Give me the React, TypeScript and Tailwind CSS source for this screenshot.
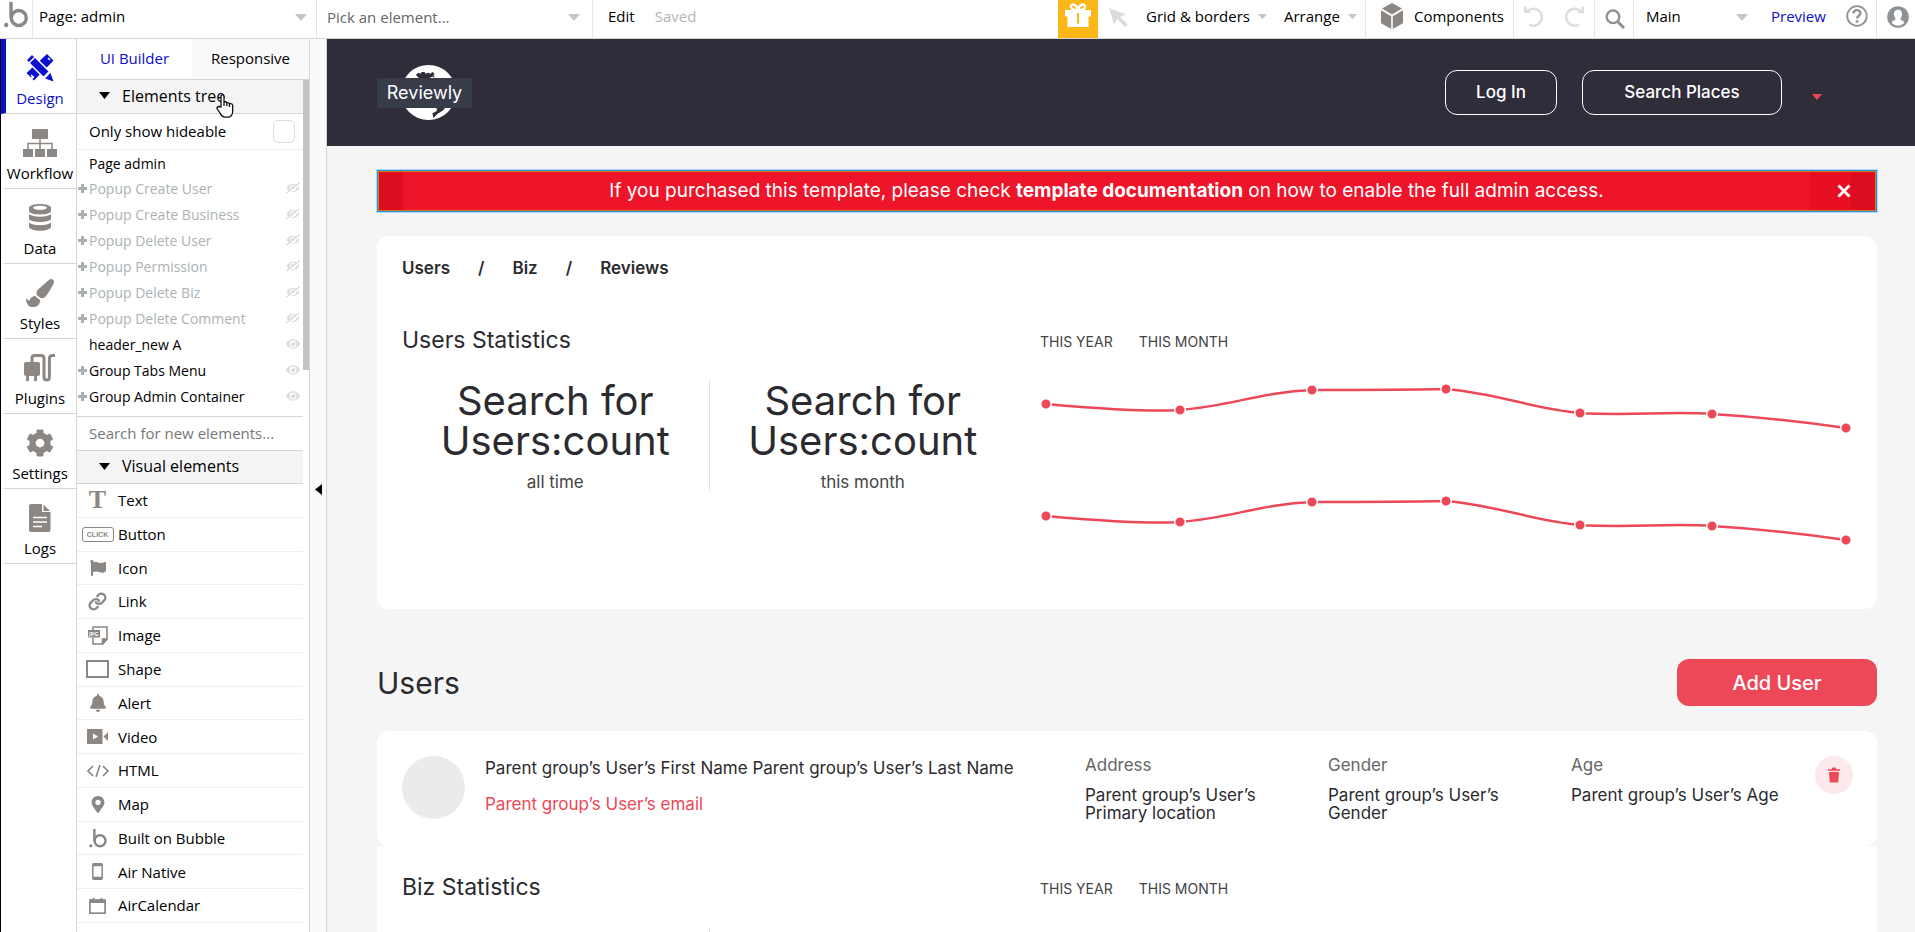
import type { ReactNode } from "react";
import { FaBell, FaCog, FaEye, FaEyeSlash, FaFlag, FaMapMarkerAlt, FaPaintBrush } from "react-icons/fa";
import { Link } from "lucide-react";

const cell = "flex shrink-0 items-center border-r border-[#e6e6e6]";

function Caret({ className = "" }: { className?: string }) {
  return (
    <svg viewBox="0 0 12 7" className={`h-[7px] w-3 fill-[#c3c7c9] ${className}`} aria-hidden="true">
      <path d="M0 0h12L6 7z" />
    </svg>
  );
}

function BubbleMark({ className = "" }: { className?: string }) {
  return (
    <svg viewBox="0 0 24 26" className={className} fill="none" stroke="#8c8783" strokeWidth="3.4" aria-hidden="true">
      <path d="M7 0v16" />
      <circle cx="14.8" cy="16" r="7.5" />
      <circle cx="2.2" cy="23" r="2.2" fill="#8c8783" stroke="none" />
    </svg>
  );
}

function TopBar() {
  return (
    <header className="flex h-[39px] shrink-0 items-stretch border-b border-[#d5d5d5] bg-white text-[15px] text-black">
      <div className={`${cell} w-[33px] pl-1`}>
        <BubbleMark className="mb-2 h-[26px] w-6" />
      </div>
      <div className={`${cell} relative w-[284px]`}>
        <select aria-label="Page" className="h-full w-full appearance-none bg-transparent pb-1.5 pl-[6px]">
          <option>Page: admin</option>
        </select>
        <Caret className="pointer-events-none absolute right-[9px] top-[14px]" />
      </div>
      <div className={`${cell} relative w-[276px]`}>
        <input
          aria-label="Pick an element"
          placeholder="Pick an element..."
          className="h-full w-full bg-transparent pb-1 pl-[10px] outline-none placeholder:text-[#666]"
        />
        <Caret className="pointer-events-none absolute right-3 top-[14px]" />
      </div>
      <div className="flex flex-1 items-center gap-5 pb-1.5 pl-[15px]">
        <button>Edit</button>
        <span className="text-[#b5b5b5]">Saved</span>
      </div>

      <button aria-label="Gift" className="flex w-10 items-start justify-center bg-[#fbb617] pt-[3px]">
        <svg viewBox="0 0 26 24" className="h-6 w-[26px]" fill="#fff">
          <path d="M0 7h26v6.5H0zM2.5 13h21v11h-21z" />
          <path d="M12 10h2v10.5h-2z" fill="#fbb617" />
          <path d="M12.5 7C8 7 5.5 5.5 6 3.2 6.6.4 11.5.8 13 7 14.5.8 19.4.4 20 3.2c.5 2.3-2 3.8-6.5 3.8" fill="none" stroke="#fff" strokeWidth="2.4" />
        </svg>
      </button>
      <button aria-label="Pointer" className="flex w-12 items-start pl-[11px] pt-2">
        <svg viewBox="0 0 20 19" className="h-[19px] w-5" fill="#dcdcdc">
          <path d="M0 0l17 6.5-6 2.5 8 7.5-3 2.5-7.5-8L5 16.5z" />
        </svg>
      </button>
      <button className="flex w-[138px] items-center gap-2 pb-1.5">
        Grid &amp; borders
        <Caret className="w-[9px]" />
      </button>
      <button className={`${cell} w-[82px] gap-2 pb-1.5`}>
        Arrange
        <Caret className="w-[9px]" />
      </button>
      <button className={`${cell} w-[148px] gap-[10px] pb-1.5 pl-[14px]`}>
        <svg viewBox="0 0 24 27" className="h-[27px] w-6" fill="#8c8783" aria-hidden="true">
          <path d="M12 0l10 5.6-10 6L2 5.6zM1 7.3l10.2 6V26L1 20.2zM23 7.3l-10.2 6V26L23 20.2z" />
        </svg>
        Components
      </button>
      <div className={`${cell} w-[81px] items-start gap-5 pl-[10px] pt-[6px]`}>
        <button aria-label="Undo">
          <svg viewBox="0 0 20 21" className="h-[21px] w-5" fill="none" stroke="#dedede" strokeWidth="2.6">
            <path d="M3.5 5A8.5 8.5 0 1 1 5 18.5M1.3 0.8v5h5" />
          </svg>
        </button>
        <button aria-label="Redo">
          <svg viewBox="0 0 20 21" className="h-[21px] w-5" fill="none" stroke="#dedede" strokeWidth="2.6">
            <path d="M16.5 5A8.5 8.5 0 1 0 15 18.5M18.7 0.8v5h-5" />
          </svg>
        </button>
      </div>
      <button aria-label="Search" className={`${cell} w-[39px] items-start pl-[10px] pt-[9px]`}>
        <svg viewBox="0 0 21 20" className="h-5 w-[21px]" fill="none" stroke="#8e9296">
          <circle cx="8" cy="7.8" r="6.3" strokeWidth="2.4" />
          <path d="M12.5 12.5l6.5 6.5" strokeWidth="3" />
        </svg>
      </button>
      <div className="relative w-[122px]">
        <select aria-label="Branch" className="h-full w-full appearance-none bg-transparent pb-1.5 pl-3">
          <option>Main</option>
        </select>
        <Caret className="pointer-events-none absolute right-2 top-[14px]" />
      </div>
      <div className={`${cell} w-[121px] gap-5 pb-1.5 pl-[15px]`}>
        <a href="#preview" className="text-[#0a10cc]">Preview</a>
        <button aria-label="Help">
          <svg viewBox="0 0 22 22" className="h-[22px] w-[22px]" fill="none" stroke="#8e9296" strokeWidth="2">
            <circle cx="11" cy="11" r="9.8" strokeWidth="1.8" />
            <path d="M7.5 8.5c0-4.5 7-4.3 7-.4 0 2.6-3.4 2.6-3.4 5.4" strokeWidth="2.4" />
            <path d="M11 15.3v2.4" strokeWidth="2.6" />
          </svg>
        </button>
      </div>
      <button aria-label="Account" className="flex w-[38px] items-center pb-1 pl-[10px]">
        <svg viewBox="0 0 22 22" className="h-[22px] w-[22px]">
          <circle cx="11" cy="11" r="10.8" fill="#8e9296" />
          <path d="M11 3.8c3.2 0 4.2 2.4 4 5-.2 2-1 3.2-1.7 4 .2 1.6 3.7 1.8 4 4.2-3.6 3.4-9 3.4-12.6 0 .3-2.4 3.8-2.6 4-4.2C8 12 7.2 10.8 7 8.8c-.2-2.6.8-5 4-5z" fill="#fff" />
        </svg>
      </button>
    </header>
  );
}

const rail: { label: string; icon: ReactNode }[] = [
  {
    label: "Design",
    icon: (
      <svg viewBox="0 0 28 28" className="h-7 w-7" fill="#0a10cc">
        <path d="M21 0l6.5 6.5L8 26.5 6.5 25l2-2-1.5-1.5-2 2L0.5 19z" />
        <path d="M0 6L6 0l17.5 17.5-6 6z" stroke="#fff" strokeWidth="1.5" />
        <path d="M2.5 9.5l6-6" stroke="#fff" strokeWidth="1.5" />
        <path d="M24.5 19l3 8.5-8.5-3z" />
        <path d="M22 4l2 2M5 21l2 2" stroke="#fff" strokeWidth="1.5" />
      </svg>
    ),
  },
  {
    label: "Workflow",
    icon: (
      <svg viewBox="0 0 34 28" className="h-7 w-[34px]" fill="#8c8783">
        <path d="M9 0h16v10H9zM0 20h10v8H0zM12 20h10v8H12zM24 20h10v8H24z" />
        <path d="M17 10v10M5 20v-5.5h24V20" fill="none" stroke="#8c8783" strokeWidth="1.5" />
      </svg>
    ),
  },
  {
    label: "Data",
    icon: (
      <svg viewBox="0 0 22 28" className="h-7 w-[22px]" fill="#8c8783">
        <path d="M11 0c6 0 11 1.5 11 4v3c0 4.5-22 4.5-22 0V4c0-2.5 5-4 11-4z" />
        <ellipse cx="11" cy="3.8" rx="7" ry="2.1" fill="#fff" />
        <path d="M0 10c4 3.5 18 3.5 22 0v5c-2 4-20 4-22 0zM0 18.5c4 3.5 18 3.5 22 0V23c-2 5-20 5-22 0z" />
      </svg>
    ),
  },
  { label: "Styles", icon: <FaPaintBrush className="h-7 w-7" /> },
  {
    label: "Plugins",
    icon: (
      <svg viewBox="0 0 32 28" className="h-7 w-8" fill="#8c8783">
        <rect x="0" y="8" width="16" height="14" rx="2" />
        <path d="M2 20h3v7H2zM10 20h3v7h-3z" />
        <path d="M8 8V4q0-2.5 3-2.5h6q3 0 3 3V23q0 3 2.7 3t2.7-3V4.5q0-3 3-3H31" fill="none" stroke="#8c8783" strokeWidth="3" />
      </svg>
    ),
  },
  { label: "Settings", icon: <FaCog className="h-7 w-7" /> },
  {
    label: "Logs",
    icon: (
      <svg viewBox="0 0 22 28" className="h-7 w-[22px]" fill="#8c8783">
        <path d="M2 0h11v8h8.5v18q0 2-2 2H2q-2 0-2-2V2q0-2 2-2z" />
        <path d="M14.5 0.5l6.5 6.5h-6.5z" />
        <path d="M4 13.5h14M4 18h14M4 22.5h9" stroke="#fff" strokeWidth="1.5" />
      </svg>
    ),
  },
];

function Rail() {
  return (
    <nav className="w-[77px] shrink-0 border-l border-r border-l-black border-r-[#d5d5d5] text-[15px] text-black">
      {rail.map(({ label, icon }, i) => (
        <button
          key={label}
          className={`flex h-[75px] w-full flex-col items-center justify-end border-b border-l-[5px] border-b-[#d5d5d5] pb-[5px] pr-[2px] ${
            i === 0 ? "border-l-[#0a10cc] text-[#0a10cc]" : "border-l-transparent"
          }`}
        >
          <span className={i === 0 ? "" : "text-[#8c8783]"}>{icon}</span>
          <span className="mt-[6px] leading-5">{label}</span>
        </button>
      ))}
    </nav>
  );
}

type TreeNode = { name: string; plus?: boolean; hidden?: boolean };

const tree: TreeNode[] = [
  { name: "Popup Create User", plus: true, hidden: true },
  { name: "Popup Create Business", plus: true, hidden: true },
  { name: "Popup Delete User", plus: true, hidden: true },
  { name: "Popup Permission", plus: true, hidden: true },
  { name: "Popup Delete Biz", plus: true, hidden: true },
  { name: "Popup Delete Comment", plus: true, hidden: true },
  { name: "header_new A" },
  { name: "Group Tabs Menu", plus: true },
  { name: "Group Admin Container", plus: true },
];

const visualElements: { label: string; icon: ReactNode }[] = [
  { label: "Text", icon: <span className="font-['Liberation_Serif',serif] text-[26px] font-bold leading-none">T</span> },
  {
    label: "Button",
    icon: (
      <span className="flex h-[15px] w-8 items-center justify-center rounded-[3px] border border-[#8c8783] font-['Liberation_Sans',sans-serif] text-[7px] font-bold leading-none">
        CLICK
      </span>
    ),
  },
  { label: "Icon", icon: <FaFlag className="h-4 w-[18px]" /> },
  { label: "Link", icon: <Link className="h-[19px] w-[19px]" strokeWidth={3} /> },
  {
    label: "Image",
    icon: (
      <svg viewBox="0 0 20 19" className="h-[19px] w-5" fill="none" stroke="#8c8783" strokeWidth="1.6">
        <path d="M5 4V1h14v12l-4.5 5H5v-6" />
        <path d="M19 13h-4.5v5z" fill="#8c8783" />
        <rect x="0" y="4" width="12" height="7.5" fill="#8c8783" stroke="none" />
        <text x="1" y="10" fontSize="5.5" fill="#fff" stroke="none" fontWeight="bold">JPG</text>
      </svg>
    ),
  },
  { label: "Shape", icon: <span className="h-[18px] w-[23px] border-2 border-[#8c8783]" /> },
  { label: "Alert", icon: <FaBell className="h-[18px] w-4" /> },
  {
    label: "Video",
    icon: (
      <svg viewBox="0 0 21 15" className="h-[15px] w-[21px]" fill="#8c8783">
        <path d="M0 0h15.5v15H0zM21 3v9l-4.5-4.5z" />
        <path d="M6 4.5l5 3-5 3z" fill="#fff" />
      </svg>
    ),
  },
  {
    label: "HTML",
    icon: (
      <svg viewBox="0 0 22 12" className="h-3 w-[22px]" fill="none" stroke="#8c8783" strokeWidth="1.6">
        <path d="M6 1.2L1 6l5 4.8M16 1.2L21 6l-5 4.8M13 0L9 12" />
      </svg>
    ),
  },
  { label: "Map", icon: <FaMapMarkerAlt className="h-[17px] w-4" /> },
  { label: "Built on Bubble", icon: <BubbleMark className="h-[19px] w-[18px]" /> },
  {
    label: "Air Native",
    icon: (
      <svg viewBox="0 0 11 17" className="h-[17px] w-[11px]" fill="none" stroke="#8c8783">
        <rect x="0.8" y="0.8" width="9.4" height="15.4" rx="1" strokeWidth="1.5" />
        <path d="M1 2h9M1 15h9" strokeWidth="2.4" />
      </svg>
    ),
  },
  {
    label: "AirCalendar",
    icon: (
      <svg viewBox="0 0 17 16" className="h-4 w-[17px]" fill="none" stroke="#8c8783">
        <rect x="0.9" y="2" width="15.2" height="13.2" strokeWidth="1.7" />
        <path d="M1 3.5h15" strokeWidth="3" />
        <path d="M4.5 0v3M12.5 0v3" strokeWidth="2" />
      </svg>
    ),
  },
];

function SectionHead({ children, className = "" }: { children: ReactNode; className?: string }) {
  return (
    <button className={`flex w-full items-center gap-3 border-b border-[#d5d5d5] bg-[#f4f4f4] pb-[2px] pl-[22px] text-base ${className}`}>
      <svg viewBox="0 0 11 7" className="h-[7px] w-[11px]" aria-hidden="true">
        <path d="M0 0h11L5.5 7z" />
      </svg>
      {children}
    </button>
  );
}

function Panel() {
  return (
    <aside className="flex w-[233px] shrink-0 flex-col border-r border-[#d5d5d5] bg-white text-[15px] text-black">
      <div className="grid h-[41px] shrink-0 grid-cols-[115fr_117fr] border-b border-[#d5d5d5]">
        <button className="pb-[2px] text-[#0a10cc]">UI Builder</button>
        <button className="bg-[#f9f9f9] pb-[2px]">Responsive</button>
      </div>
      <div className="flex">
        <div className="min-w-0 flex-1">
          <SectionHead className="h-[34px]">Elements tree</SectionHead>
          <label className="flex h-9 items-center justify-between border-b border-[#efefef] pl-3 pr-2">
            Only show hideable
            <input type="checkbox" className="h-[23px] w-[22px] appearance-none rounded-[5px] border border-[#dcdcdc] bg-white" />
          </label>
          <div className="pb-[7px] pt-[2px] text-[14px]">
            <div className="h-[23px] pl-3 leading-6">Page admin</div>
            {tree.map((node) => (
              <div
                key={node.name}
                className={`flex h-[26px] items-center pr-[3px] ${node.hidden ? "text-[#abb2b5]" : ""}`}
              >
                <span className="flex w-3 shrink-0 pl-px">
                  {node.plus && (
                    <svg viewBox="0 0 9 9" className="h-[9px] w-[9px] stroke-[#a9b0b3]" aria-hidden="true">
                      <path d="M4.5 0v9M0 4.5h9" strokeWidth="3" />
                    </svg>
                  )}
                </span>
                <span className="flex-1 whitespace-nowrap">{node.name}</span>
                {node.hidden ? (
                  <FaEyeSlash className="-scale-x-100 text-[#dcdcdc]" />
                ) : (
                  <FaEye className="text-[#dcdcdc]" />
                )}
              </div>
            ))}
          </div>
        </div>
        <div className="h-[290px] w-[6px] bg-[#c4c4c4]" />
      </div>
      <div className="mr-[6px]">
        <input
          aria-label="Search for new elements"
          placeholder="Search for new elements..."
          className="block h-[35px] w-full border-y border-[#d5d5d5] pb-[2px] pl-3 outline-none placeholder:text-[#777]"
        />
        <SectionHead className="h-[33px]">Visual elements</SectionHead>
        <ul className="grid h-[439px] auto-rows-fr">
          {visualElements.map(({ label, icon }) => (
            <li key={label} className="flex items-center border-b border-[#efefef]">
              <span className="flex w-[41px] justify-center text-[#8c8783]">{icon}</span>
              {label}
            </li>
          ))}
        </ul>
      </div>
    </aside>
  );
}

const points = [
  [6, 24],
  [140, 30],
  [272, 10],
  [406, 9],
  [540, 33],
  [672, 34],
  [806, 48],
];

function LineChart() {
  return (
    <svg viewBox="0 0 812 56" className="w-full" fill="none" role="img" aria-label="Trend">
      <path
        d="M6 24C55 28 100 32 140 30C190 26 222 12 272 10C320 10 360 10 406 9C455 13 495 29 540 33C590 36 630 31 672 34C720 37 765 42 806 48"
        stroke="#ed4857"
        strokeWidth="2.5"
      />
      {points.map(([x, y]) => (
        <circle key={x} cx={x} cy={y} r="5.3" fill="#ed4857" stroke="#fff" strokeWidth="1.5" />
      ))}
    </svg>
  );
}

function Count({ caption }: { caption: string }) {
  return (
    <div className="flex-1 text-center">
      <p className="pt-px text-[40px] leading-10">
        Search for
        <br />
        Users:count
      </p>
      <p className="mt-[9px] text-[17px] leading-6 text-[#444]">{caption}</p>
    </div>
  );
}

function Statistics({ title, counts, charts }: { title: string; counts?: string[]; charts?: ReactNode }) {
  return (
    <section className="grid grid-cols-[638fr_812fr]">
      <div>
        <h2 className="text-[23px] leading-8">{title}</h2>
        <div className="mt-6 flex w-[614px] max-w-full">
          {counts ? <Count caption={counts[0]} /> : <div className="flex-1" />}
          <div className="h-[110px] w-px bg-[#e3e3e3]" />
          {counts ? <Count caption={counts[1]} /> : <div className="flex-1" />}
        </div>
      </div>
      <div>
        <div className="mb-[22px] flex h-[34px] items-center gap-[26px] text-[14px] text-[#444]">
          <button>THIS YEAR</button>
          <button>THIS MONTH</button>
        </div>
        {charts}
      </div>
    </section>
  );
}

function Field({ label, children, className }: { label: string; children: ReactNode; className: string }) {
  return (
    <div className={`shrink-0 ${className}`}>
      <p className="text-[17px] leading-[18px] text-[#666]">{label}</p>
      <p className="mt-3 text-[17px] leading-[18px]">{children}</p>
    </div>
  );
}

function Canvas() {
  return (
    <main className="min-w-0 flex-1 overflow-hidden bg-[#f5f5f5] font-[Inter,sans-serif] text-[#2b2b2f]">
      <div className="flex h-[107px] items-center bg-[#302d3b] pl-[50px] pr-[93px] text-white">
        <div className="relative flex h-[55px] w-[95px] items-center justify-center">
          <svg viewBox="0 0 56 56" className="absolute left-6 top-0 h-[55px] w-[55px]" aria-hidden="true">
            <circle cx="28" cy="28" r="28" fill="#fff" />
            <path d="M15 10l3-2 2 1 1-2 3 0 1 2 3-1 2 1 2-2 2 2-1 2 2 2-3-1-3 1-2 2-3-1-4 1-2-2zM33 42l4 3-1 2-4 2 1 5 4-4 6-4 3-4z" fill="#302d3b" />
          </svg>
          <span className="relative flex h-[30px] w-full items-center justify-center bg-[#383b48] text-lg">Reviewly</span>
        </div>
        <div className="flex-1" />
        <button className="h-[45px] w-[112px] rounded-xl border border-white text-[17px] font-medium">Log In</button>
        <button className="ml-[25px] h-[45px] w-[200px] rounded-xl border border-white text-[17px] font-medium">Search Places</button>
        <svg viewBox="0 0 10 6" className="ml-[30px] mt-2 h-[6px] w-[10px] fill-[#ed4857]" aria-hidden="true">
          <path d="M0 0h10L5 6z" />
        </svg>
      </div>

      <div className="pl-[50px] pr-[38px] pt-6">
        <div className="border border-[#1f8fe8] ring-1 ring-[#b5d8f5]">
          <div className="flex h-10 items-stretch border border-[#d97b12] bg-[#ee1429] text-white">
            <div className="w-6 bg-[#dc0d20]" />
            <p className="flex flex-1 items-center justify-center text-[19px]">
              <span>
                If you purchased this template, please check <b>template documentation</b> on how to enable the full admin access.
              </span>
            </p>
            <button aria-label="Close" className="flex w-[41px] items-center justify-end bg-[#e90f22]">
              <svg viewBox="0 0 14 14" className="h-[14px] w-[14px]" stroke="#fff" strokeWidth="2.8">
                <path d="M1.5 1.5l11 11M12.5 1.5l-11 11" />
              </svg>
            </button>
            <div className="w-6 bg-[#dc0d20]" />
          </div>
        </div>

        <div className="mt-6 rounded-xl bg-white px-[25px] pb-[61px] pt-5">
          <nav className="mb-11 flex gap-7 text-[17px] font-semibold leading-6">
            <a href="#users">Users</a>
            <span>/</span>
            <a href="#biz">Biz</a>
            <span>/</span>
            <a href="#reviews">Reviews</a>
          </nav>
          <Statistics
            title="Users Statistics"
            counts={["all time", "this month"]}
            charts={
              <div className="flex flex-col gap-14">
                <LineChart />
                <LineChart />
              </div>
            }
          />
        </div>

        <div className="mb-[25px] mt-[50px] flex items-center justify-between">
          <h1 className="text-[30px] leading-9">Users</h1>
          <button className="h-[47px] w-[200px] rounded-xl bg-[#ed4857] text-[20px] font-medium text-white">Add User</button>
        </div>

        <div className="flex h-[115px] items-start rounded-xl bg-white pl-[25px] pr-6 pt-[25px]">
          <div className="h-[63px] w-[63px] shrink-0 rounded-full bg-[#ebebeb]" />
          <div className="ml-5 min-w-0 flex-1 text-[17px] leading-6">
            <p>Parent group’s User’s First Name Parent group’s User’s Last Name</p>
            <p className="mt-3 text-[#ed4857]">Parent group’s User’s email</p>
          </div>
          <Field label="Address" className="w-[243px] pr-10">Parent group’s User’s Primary location</Field>
          <Field label="Gender" className="w-[243px] pr-10">Parent group’s User’s Gender</Field>
          <Field label="Age" className="w-[244px]">Parent group’s User’s Age</Field>
          <button aria-label="Delete" className="flex h-[38px] w-[38px] shrink-0 items-center justify-center rounded-full bg-[#fbe9ec]">
            <svg viewBox="0 0 12 16" className="h-4 w-3" fill="#ed4857">
              <path d="M0 2.2h3.5L4.5 0.5h3l1 1.7H12v1.6H0zM1 5h10l-.8 10.5H1.8z" />
            </svg>
          </button>
        </div>
        <div className="bg-white px-[25px] pt-[25px]">
          <Statistics title="Biz Statistics" />
        </div>
      </div>
    </main>
  );
}

export default function App() {
  return (
    <div className="relative flex h-screen flex-col overflow-hidden bg-white font-['Open_Sans',sans-serif]">
      <TopBar />
      <div className="flex min-h-0 flex-1">
        <Rail />
        <Panel />
        <button aria-label="Collapse panel" className="flex w-[17px] shrink-0 items-center border-r border-[#d5d5d5] bg-[#fafafa] pl-[5px] pt-2">
          <svg viewBox="0 0 7 11" className="h-[11px] w-[7px]">
            <path d="M7 0v11L0 5.5z" />
          </svg>
        </button>
        <Canvas />
      </div>
      <svg viewBox="0 0 18 24" className="pointer-events-none absolute left-[216px] top-[94px] h-6 w-[18px]" fill="#fff" stroke="#111" strokeWidth="1.3" aria-hidden="true">
        <path d="M5 13V2.5q0-1.7 1.5-1.7T8 2.5V8q2-.8 2.8.8 2-.6 2.6 1 2.8-.6 3.3 1.7v5.2q0 5.5-4.2 6.5H8.5Q5.5 22.5 4 19l-3-4.5q0-2 2-2zM8 8v4M10.8 8.8V12M13.4 9.8V13" />
      </svg>
    </div>
  );
}
